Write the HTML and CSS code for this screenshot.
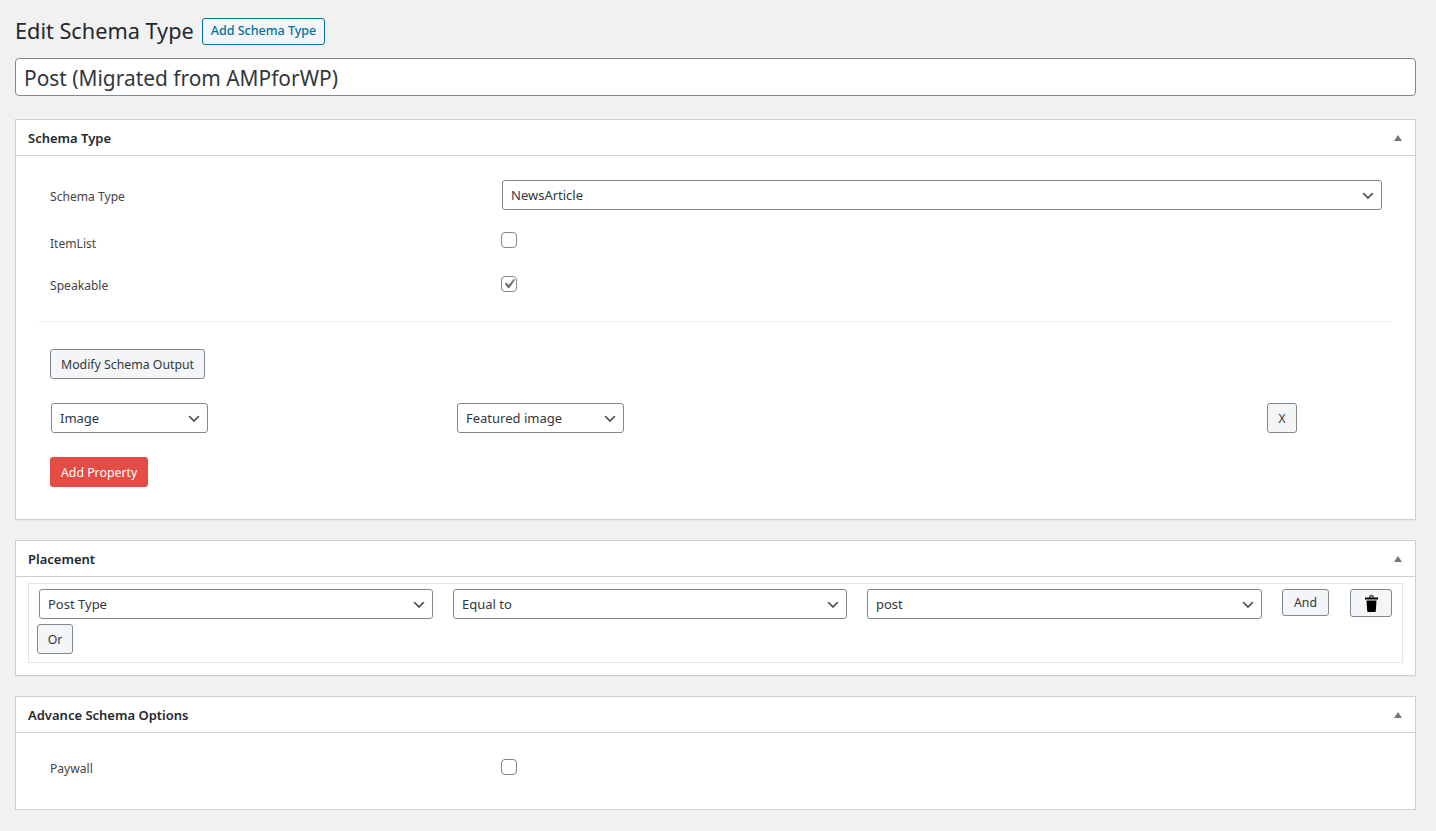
FILE: index.html
```html
<!DOCTYPE html>
<html lang="en">
<head>
<meta charset="utf-8">
<title>Edit Schema Type</title>
<link rel="stylesheet" href="styles.css">
</head>
<body>
<div class="wrap">
  <div class="page-head">
    <h1>Edit Schema Type</h1>
    <a class="btn-outline">Add Schema Type</a>
  </div>
  <input class="title-input" type="text" value="Post (Migrated from AMPforWP)">

  <section class="card first">
    <header class="card-head"><h2>Schema Type</h2><span class="toggle"></span></header>
    <div class="schema-body">
      <div class="form-row row-select">
        <label class="row-label">Schema Type</label>
        <select class="sel"><option>NewsArticle</option></select>
      </div>
      <div class="form-row row-itemlist">
        <label class="row-label">ItemList</label>
        <input class="check" type="checkbox">
      </div>
      <div class="form-row row-speakable">
        <label class="row-label">Speakable</label>
        <input class="check" type="checkbox" checked>
      </div>
      <hr class="sep">
      <div class="output">
        <button class="btn modify">Modify Schema Output</button>
        <div class="prop-row">
          <select class="sel sel-image"><option>Image</option></select>
          <select class="sel sel-feat"><option>Featured image</option></select>
          <button class="btn btn-x">X</button>
        </div>
        <button class="btn-red">Add Property</button>
      </div>
    </div>
  </section>

  <section class="card">
    <header class="card-head"><h2>Placement</h2><span class="toggle"></span></header>
    <div class="placement-body">
      <div class="place-box">
        <div class="place-row">
          <select class="sel"><option>Post Type</option></select>
          <select class="sel"><option>Equal to</option></select>
          <select class="sel"><option>post</option></select>
          <button class="btn btn-and">And</button>
          <button class="btn btn-trash" aria-label="Delete">
            <svg class="trash" viewBox="0 0 13 17"><path d="M4.500 2.500V1Q4.500.2 5.300.2H7.700Q8.500.2 8.500 1V2.500H7.500V1.200H5.500V2.500zM0 2.500H13V4.500H0zM1.500 5.500H11.500L10.800 16a1 1 0 0 1-1 1H3.200a1 1 0 0 1-1-1z"/></svg>
          </button>
        </div>
        <button class="btn btn-or">Or</button>
      </div>
    </div>
  </section>

  <section class="card">
    <header class="card-head"><h2>Advance Schema Options</h2><span class="toggle"></span></header>
    <div class="advance-body">
      <div class="form-row row-paywall">
        <label class="row-label">Paywall</label>
        <input class="check" type="checkbox">
      </div>
    </div>
  </section>
</div>
</body>
</html>
```
FILE: styles.css
```css
* { box-sizing: border-box; }
html, body { margin: 0; padding: 0; }
body {
  background: #f1f1f1;
  color: #444;
  font-family: "Noto Sans", "Open Sans", sans-serif;
  font-size: 13px;
  line-height: 1.4;
}
.wrap { padding: 17px 20px 0 15px; }
.page-head { display: flex; align-items: center; height: 28px; gap: 8px; }
h1 {
  margin: 0;
  font-size: 21.700px;
  font-weight: 400;
  color: #23282d;
  line-height: 28px;
}
.btn-outline {
  display: flex;
  align-items: center;
  height: 27px;
  padding: 0 8px;
  border: 1px solid #0071a1;
  border-radius: 3px;
  background: #f3f5f6;
  color: #0071a1;
  font-size: 12.500px;
  font-weight: 500;
}
.title-input {
  display: block;
  width: 100%;
  height: 38px;
  margin-top: 13px;
  padding: 1px 8px 0;
  border: 1px solid #7e8993;
  border-radius: 4px;
  background: #fff;
  color: #32373c;
  font: 400 20.900px "Noto Sans", sans-serif;
}
.card {
  margin-top: 20px;
  background: #fff;
  border: 1px solid #ccd0d4;
  box-shadow: 0 1px 1px rgba(0,0,0,.04);
}
.card.first { margin-top: 23px; }
.card-head {
  display: flex;
  align-items: center;
  justify-content: space-between;
  height: 36px;
  padding: 1px 12px 0;
  border-bottom: 1px solid #ccd0d4;
}
.card-head h2 {
  margin: 0;
  font-size: 13px;
  font-weight: 600;
  color: #23282d;
}
.toggle {
  width: 0;
  height: 0;
  margin-right: 1px;
  border-left: 4px solid transparent;
  border-right: 4px solid transparent;
  border-bottom: 6px solid #72777c;
}
.row-label { color: #444; font-size: 12.100px; line-height: 16px; }
.sel {
  appearance: none;
  -webkit-appearance: none;
  display: block;
  width: 100%;
  height: 30px;
  padding: 0 24px 0 8px;
  border: 1px solid #7e8993;
  border-radius: 3px;
  color: #32373c;
  font: 400 13px "Noto Sans", sans-serif;
  background: #fff url("data:image/svg+xml;charset=US-ASCII,%3Csvg%20xmlns%3D%22http%3A%2F%2Fwww.w3.org%2F2000%2Fsvg%22%20width%3D%2220%22%20height%3D%2220%22%3E%3Cpath%20d%3D%22M5%206l5%205%205-5%202%201-7%207-7-7%202-1z%22%20fill%3D%22%23555%22%2F%3E%3C%2Fsvg%3E") no-repeat right 5px top 55%;
  background-size: 16px 16px;
}
.check {
  appearance: none;
  -webkit-appearance: none;
  display: block;
  width: 16px;
  height: 16px;
  margin: 0;
  border: 1px solid #7e8993;
  border-radius: 4px;
  background: #fff;
}
.check:checked {
  background: #fff url("data:image/svg+xml;charset=US-ASCII,%3Csvg%20xmlns%3D%22http%3A%2F%2Fwww.w3.org%2F2000%2Fsvg%22%20viewBox%3D%220%200%2020%2020%22%3E%3Cpath%20d%3D%22M14.830%204.890l1.340.940-5.810%208.380H9.020L5.780%209.670l1.340-1.250%202.570%202.400z%22%20fill%3D%22%23757575%22%2F%3E%3C%2Fsvg%3E") center / 20px 20px no-repeat;
}
.schema-body { padding: 24px 23px 32px 22px; }
.form-row {
  display: grid;
  grid-template-columns: 451px 1fr;
  align-items: start;
  padding-left: 12px;
}
.row-select { grid-template-columns: 452px 880px; }
.row-select .row-label { margin-top: 9px; }
.row-itemlist { margin-top: 22px; height: 16px; }
.row-itemlist .row-label { margin-top: 4px; }
.row-speakable { margin-top: 28px; height: 16px; }
.row-speakable .row-label { margin-top: 2px; }
.sep {
  margin: 29px 0 0;
  border: 0;
  border-top: 1px solid #eeeeee;
}
.output {
  display: flex;
  flex-direction: column;
  align-items: flex-start;
  padding: 27px 0 0 12px;
}
.btn {
  height: 30px;
  padding: 0 10px;
  border: 1px solid #7e8993;
  border-radius: 3px;
  background: #f3f5f6;
  color: #32373c;
  font: 400 12.300px "Noto Sans", sans-serif;
}
.prop-row {
  display: grid;
  grid-template-columns: 406px 810px 30px;
  align-items: center;
  margin: 24px 0 24px 1px;
}
.sel-image { width: 157px; }
.sel-feat { width: 167px; }
.btn-x { width: 30px; padding: 0; font-size: 12px; }
.btn-red {
  height: 30px;
  padding: 0 11px;
  border: 0;
  border-radius: 3px;
  background: #e44d45;
  color: #fff;
  font: 400 12.300px "Noto Sans", sans-serif;
}
.placement-body { padding: 6px 12px 12px; }
.place-box {
  height: 80px;
  padding: 5px 0 0 8px;
  border: 1px solid #e5e5e5;
}
.place-row {
  display: grid;
  grid-template-columns: 394px 394px 395px 47px 42px;
  column-gap: 20px;
  align-items: start;
  margin-left: 2px;
}
.place-row .btn { height: 27px; padding: 0; }
.place-row .btn-trash {
  width: 42px;
  height: 28px;
  display: flex;
  align-items: center;
  justify-content: center;
  margin-left: 1px;
}
.trash { width: 13px; height: 17px; display: block; fill: #000; }
.btn-or {
  display: block;
  width: 36px;
  height: 30px;
  padding: 0;
  margin-top: 5px;
}
.advance-body { height: 76px; padding: 26px 0 0 22px; }
.row-paywall { height: 16px; }
.row-paywall .row-label { margin-top: 2px; }
```
